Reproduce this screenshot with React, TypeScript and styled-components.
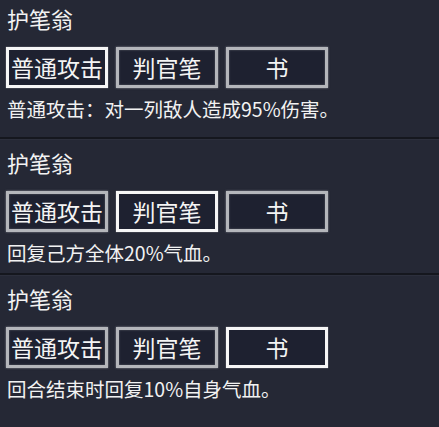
import React, { useState } from "react";
import styled, { createGlobalStyle } from "styled-components";

const Global = createGlobalStyle`
  html, body {
    margin: 0;
    padding: 0;
    background: #252835;
  }
  body {
    font-family: "Noto Sans CJK SC", "Noto Sans", sans-serif;
    color: #f2f2f2;
    overflow: hidden;
  }
`;

const Page = styled.div`
  width: 439px;
  height: 427px;
  display: flex;
  flex-direction: column;
  background: #252835;
`;

const Panel = styled.section<{ $first?: boolean; $last?: boolean }>`
  box-sizing: border-box;
  height: ${(p) => (p.$first ? "139px" : p.$last ? "auto" : "136px")};
  flex: ${(p) => (p.$last ? "1" : "none")};
  padding: ${(p) => (p.$first ? "5px" : "10px")} 6px 0 6px;
  display: flex;
  flex-direction: column;
  border-bottom: ${(p) => (p.$last ? "none" : "2px solid #15171e")};
  box-shadow: ${(p) => (p.$last ? "none" : "0 1px 0 #2c2f3c")};
`;

const Title = styled.div`
  font-size: 22px;
  line-height: 26px;
  padding-left: 1px;
`;

const ButtonRow = styled.div`
  display: flex;
  gap: 8px;
  margin-top: 16px;
`;

const SkillButton = styled.button<{ $active?: boolean }>`
  box-sizing: border-box;
  width: 102px;
  height: 41px;
  padding: 0;
  background: #1e2130;
  color: #f4f4f4;
  font-family: "Noto Sans CJK SC", "Noto Sans", sans-serif;
  font-size: 23px;
  line-height: 1;
  cursor: pointer;
  border: 3px solid ${(p) => (p.$active ? "#f6f6f6" : "#b4b6bb")};
  box-shadow: ${(p) =>
    p.$active
      ? "0 0 1px rgba(255,255,255,0.6)"
      : "0 0 2px rgba(220,220,225,0.55), inset 0 0 2px rgba(220,220,225,0.35)"};
  display: flex;
  align-items: center;
  justify-content: center;
`;

const Desc = styled.div`
  font-size: 19.5px;
  line-height: 24px;
  margin-top: 9px;
  padding-left: 1px;
`;

const skills = [
  { name: "普通攻击", desc: "普通攻击：对一列敌人造成95%伤害。" },
  { name: "判官笔", desc: "回复己方全体20%气血。" },
  { name: "书", desc: "回合结束时回复10%自身气血。" },
];

function SkillPanel({ initial, first, last }: { initial: number; first?: boolean; last?: boolean }) {
  const [sel, setSel] = useState(initial);
  return (
    <Panel $first={first} $last={last}>
      <Title>护笔翁</Title>
      <ButtonRow>
        {skills.map((s, i) => (
          <SkillButton key={s.name} $active={i === sel} onClick={() => setSel(i)}>
            {s.name}
          </SkillButton>
        ))}
      </ButtonRow>
      <Desc>{skills[sel].desc}</Desc>
    </Panel>
  );
}

export default function App() {
  return (
    <Page>
      <Global />
      <SkillPanel initial={0} first />
      <SkillPanel initial={1} />
      <SkillPanel initial={2} last />
    </Page>
  );
}
